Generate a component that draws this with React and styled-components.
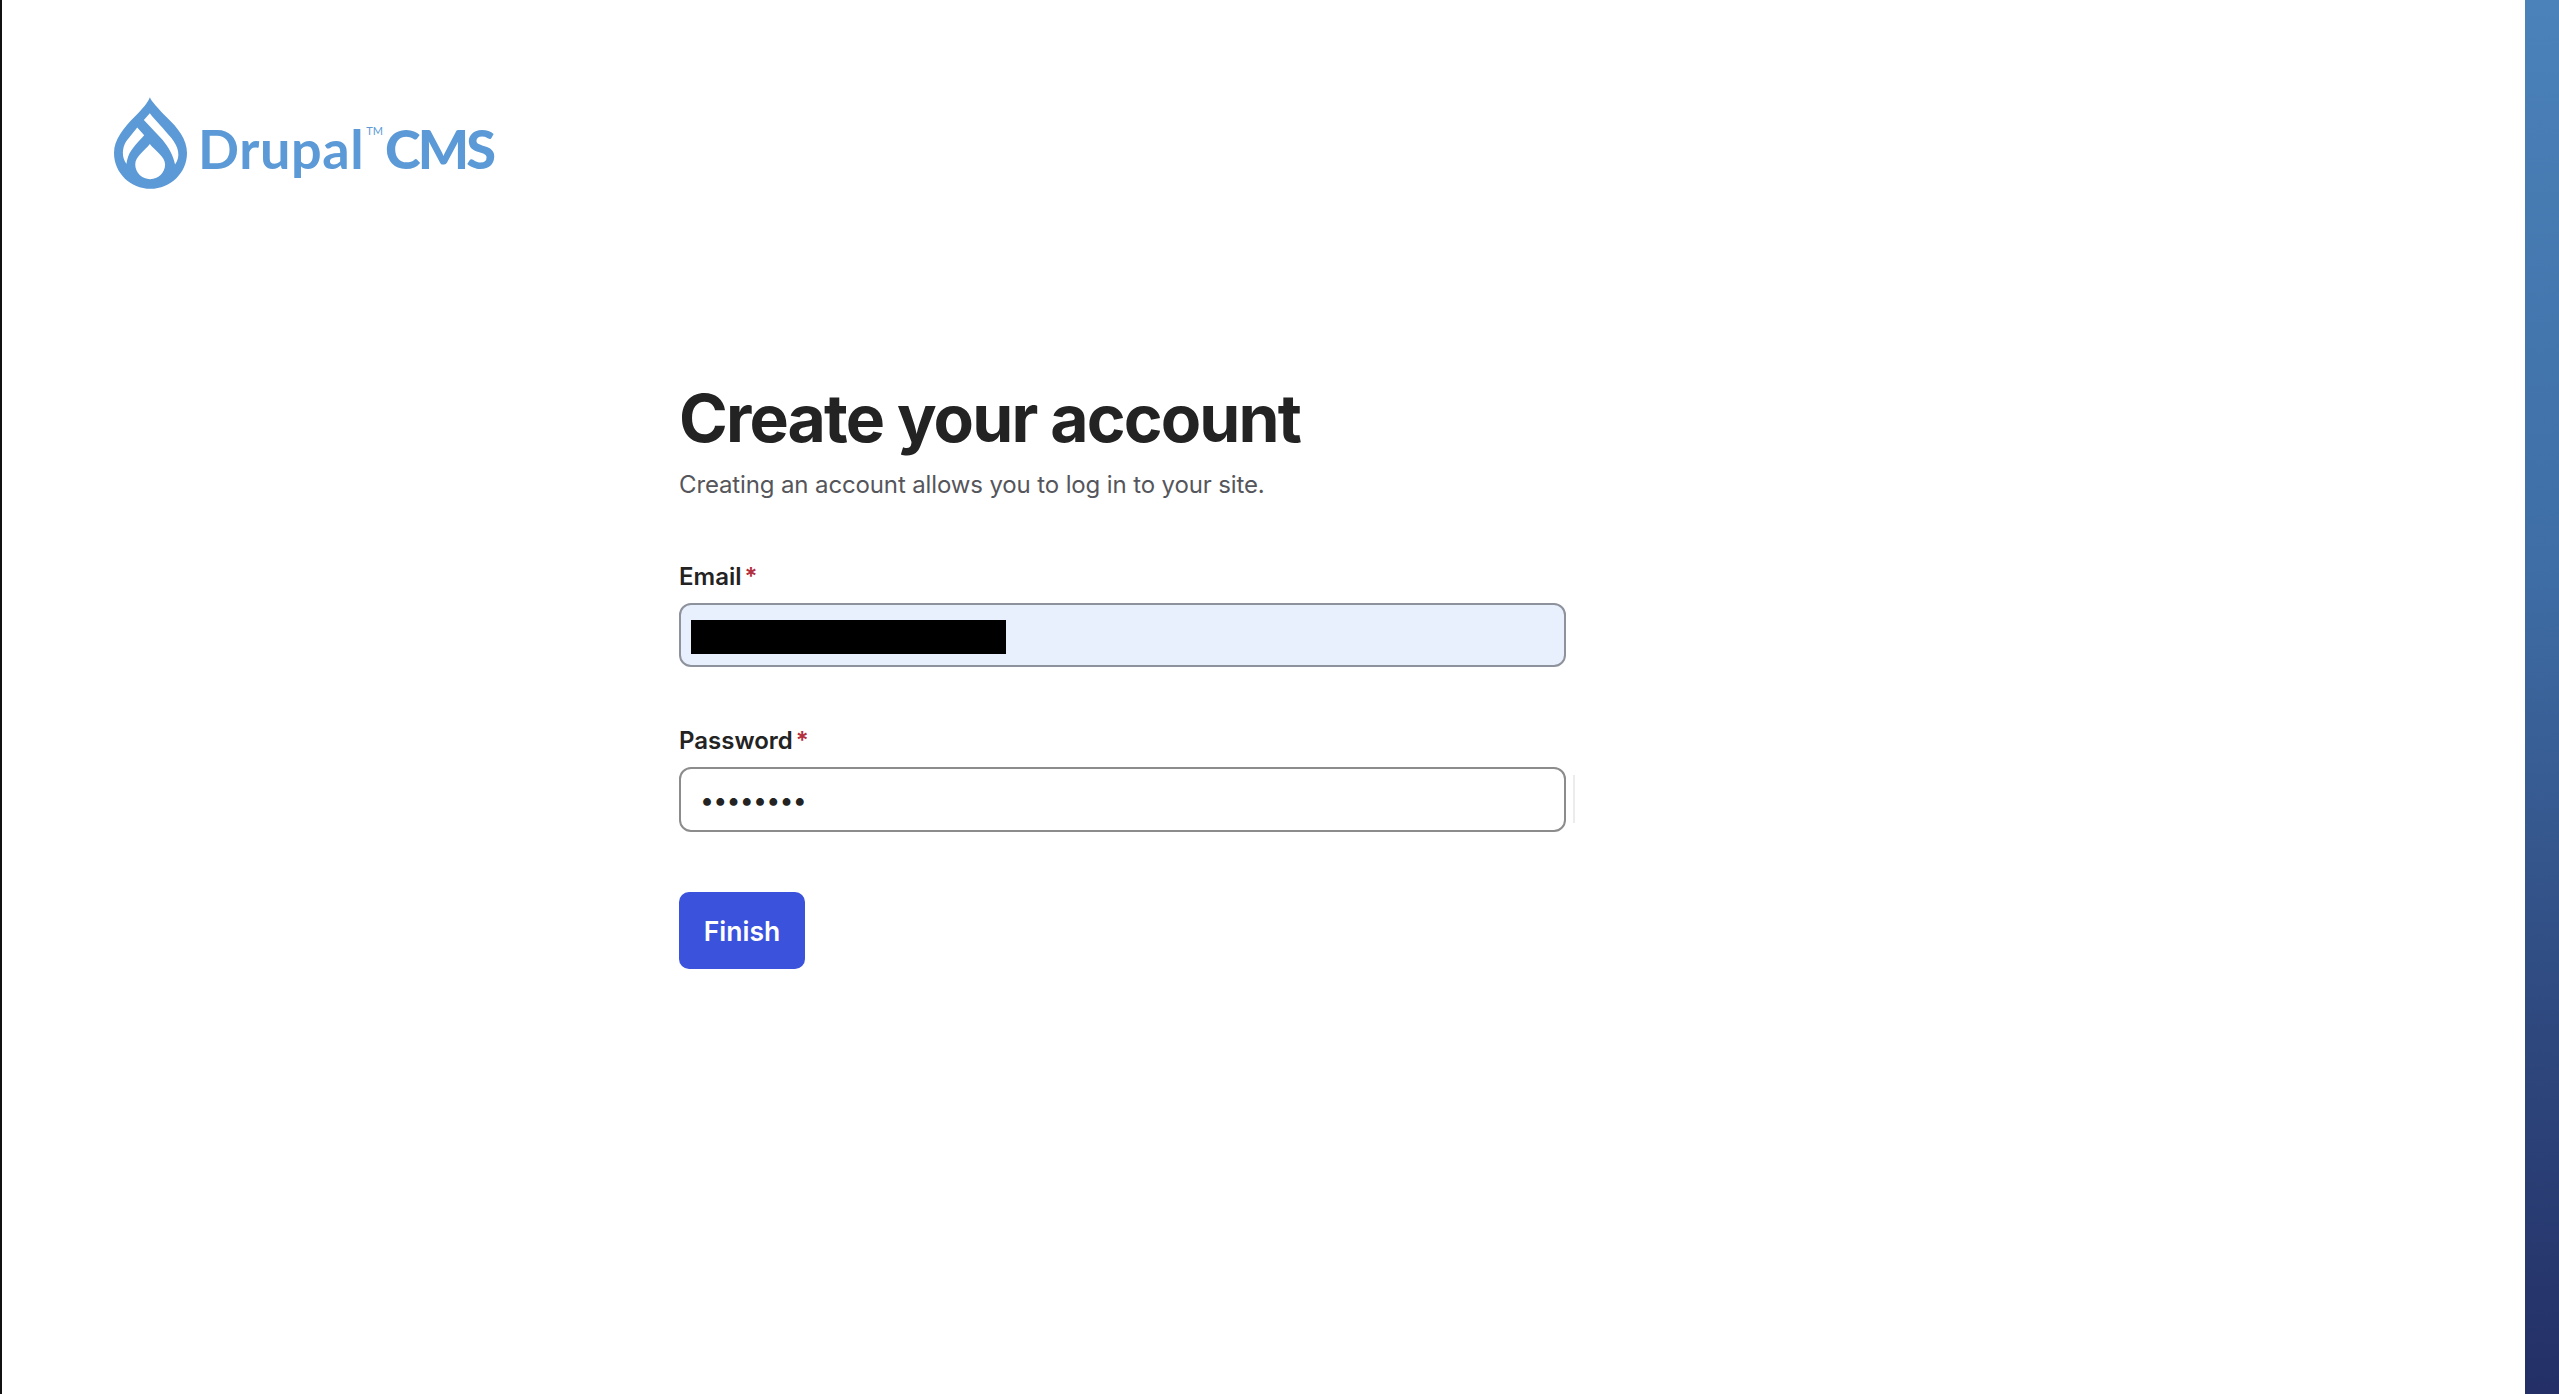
import React from "react";
import styled, { createGlobalStyle } from "styled-components";

const GlobalStyle = createGlobalStyle`
  html, body {
    margin: 0;
    padding: 0;
    background: #fff;
  }
  * {
    box-sizing: border-box;
  }
`;

const Page = styled.div`
  display: flex;
  width: 100%;
  height: 100vh;
  overflow: hidden;
  font-family: Inter, "Liberation Sans", sans-serif;
  border-left: 2px solid #111;
`;

const Main = styled.main`
  flex: 1;
  padding: 97px 0 0 112px;
`;

const SideBar = styled.aside`
  width: 34px;
  background: linear-gradient(180deg, #4a82b9 0%, #3f6ea6 40%, #2f4a80 72%, #232f66 100%);
`;

const Logo = styled.div`
  display: flex;
  align-items: flex-start;
  height: 93px;
  color: #5b9ad6;
`;

const LogoText = styled.span`
  margin-top: 20px;
  font-family: Lato, sans-serif;
  font-size: 54px;
  line-height: 64px;
  font-weight: ${(p) => p.$weight};
  letter-spacing: ${(p) => p.$spacing};
  margin-left: ${(p) => p.$left};
`;

const TradeMark = styled.span`
  margin: 29px 0 0 2px;
  font-size: 11px;
  line-height: 10px;
  font-family: Lato, sans-serif;
`;

const Form = styled.form`
  width: 887px;
  margin: 188px 0 0 565px;
`;

const Title = styled.h1`
  margin: 0;
  font-size: 66px;
  line-height: 80px;
  font-weight: 700;
  letter-spacing: -1.85px;
  color: #232323;
`;

const Intro = styled.p`
  margin: 9px 0 0;
  font-size: 24px;
  line-height: 36px;
  letter-spacing: -0.13px;
  color: #55565b;
`;

const Field = styled.div`
  position: relative;
  margin-top: ${(p) => p.$top};
`;

const Label = styled.label`
  display: block;
  font-size: 24px;
  line-height: 32px;
  font-weight: 600;
  color: #232323;
`;

const Required = styled.span`
  margin-left: 3px;
  color: #b3303e;
`;

const Input = styled.input`
  display: block;
  width: 100%;
  height: ${(p) => p.$height};
  margin-top: 10px;
  padding: 0 19px;
  border: 2.5px solid ${(p) => p.$border};
  border-radius: 12px;
  background: ${(p) => p.$bg};
  outline: none;
  font-family: Inter, sans-serif;
  font-size: 25px;
  letter-spacing: -0.8px;
  color: #232323;
`;

const Redaction = styled.div`
  position: absolute;
  left: 12px;
  bottom: 13px;
  width: 315px;
  height: 34px;
  background: #000;
`;

const Divider = styled.div`
  position: absolute;
  left: 894px;
  bottom: 9px;
  width: 2px;
  height: 48px;
  background: #ececec;
`;

const Finish = styled.button`
  display: block;
  width: 126px;
  height: 77px;
  margin-top: 60px;
  padding: 0;
  border: none;
  border-radius: 10px;
  background: #3a52dc;
  color: #fff;
  font-family: Inter, sans-serif;
  font-size: 26.5px;
  font-weight: 600;
`;

const DropIcon = () => (
  <svg width="73" height="92" viewBox="42 37 220 276" aria-hidden="true">
    <path
      fill="currentColor"
      d="M150 37C155 50 175 70 200 97C235 130 262 165 262 205C262 265 212 313 152 313C92 313 42 265 42 205C42 165 70 130 105 95C128 72 145 52 150 37Z"
    />
    <path
      fill="#fff"
      d="M150 85C165 105 195 135 215 160C235 185 245 215 226 240C222 215 205 185 188 165L132 106Z"
    />
    <path
      fill="#fff"
      d="M112 128L133 152C118 170 95 190 85 215C82 225 80 232 80 238C65 220 65 190 80 168Z"
    />
    <path
      fill="#fff"
      d="M150 178C165 198 196 215 196 240C196 265 175 284 151 284C127 284 106 265 106 240C106 215 135 198 150 178Z"
    />
  </svg>
);

export default function App() {
  return (
    <>
      <GlobalStyle />
      <Page>
        <Main>
          <Logo>
            <DropIcon />
            <LogoText $weight={700} $spacing="0.6px" $left="11px">
              Drupal
            </LogoText>
            <TradeMark>TM</TradeMark>
            <LogoText $weight={900} $spacing="-2.8px" $left="2px">
              CMS
            </LogoText>
          </Logo>
          <Form>
            <Title>Create your account</Title>
            <Intro>Creating an account allows you to log in to your site.</Intro>
            <Field $top="58px">
              <Label htmlFor="email">
                Email<Required>*</Required>
              </Label>
              <Input
                id="email"
                type="text"
                $height="64px"
                $bg="#e8f0fe"
                $border="#8e929c"
                readOnly
              />
              <Redaction />
            </Field>
            <Field $top="58px">
              <Label htmlFor="password">
                Password<Required>*</Required>
              </Label>
              <Input
                id="password"
                type="password"
                $height="65px"
                $bg="#fff"
                $border="#8c8c8c"
                defaultValue="password"
              />
              <Divider />
            </Field>
            <Finish type="button">Finish</Finish>
          </Form>
        </Main>
        <SideBar />
      </Page>
    </>
  );
}
